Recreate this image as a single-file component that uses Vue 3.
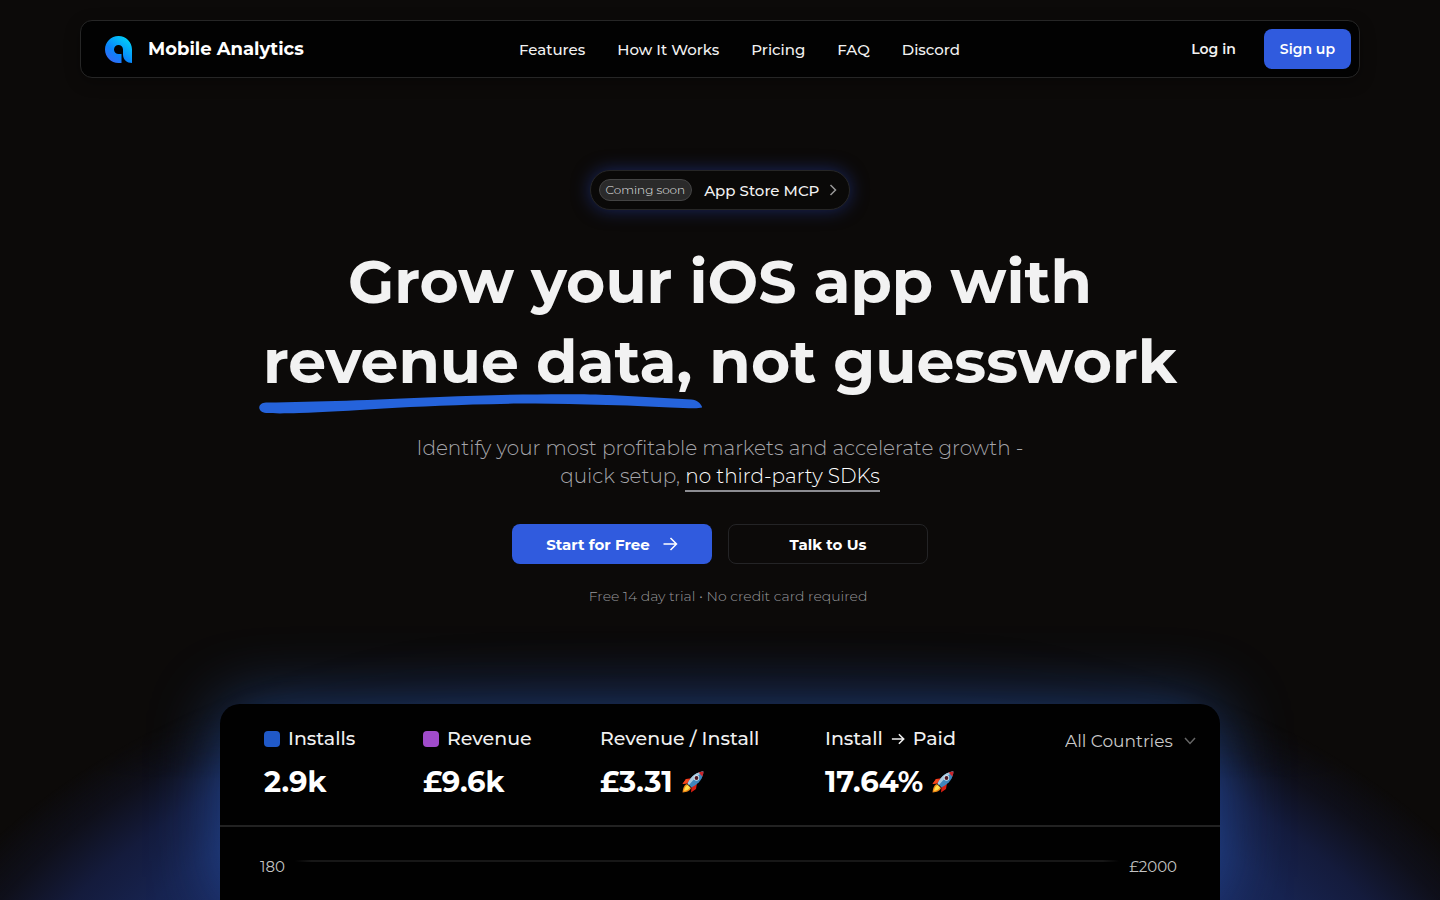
<template>
  <div class="page">
    <div class="glow" />

    <header class="navbar">
      <a class="brand" href="#">
        <svg class="logo" viewBox="0 0 27 27" aria-hidden="true">
          <defs>
            <linearGradient id="logo-fill" x1="0.1" y1="0.95" x2="0.8" y2="0.05">
              <stop offset="0" stop-color="#3b66f5" />
              <stop offset="0.4" stop-color="#0a84fb" />
              <stop offset="1" stop-color="#00d0f8" />
            </linearGradient>
          </defs>
          <path
            fill="url(#logo-fill)"
            d="M13.5 0C21 0 27 6 27 13.5V27C22 27 18 23.5 18 18.5V13.5A4.5 4.5 0 1 0 13.5 18H16.5V27H13.5C6 27 0 21 0 13.5S6 0 13.5 0Z"
          />
        </svg>
        <span>Mobile Analytics</span>
      </a>

      <nav class="links">
        <a v-for="link in links" :key="link" href="#">{{ link }}</a>
      </nav>

      <div class="account">
        <a class="login" href="#">Log in</a>
        <button class="signup" type="button">Sign up</button>
      </div>
    </header>

    <main class="hero">
      <a class="announce" href="#">
        <span class="tag">Coming soon</span>
        <span>App Store MCP</span>
        <svg class="chevron" viewBox="0 0 16 16" aria-hidden="true">
          <path d="M5.5 3L10.5 8L5.5 13" />
        </svg>
      </a>

      <h1>
        Grow your iOS app with<br>
        <span class="marked">revenue data,<svg viewBox="0 0 442 20" preserveAspectRatio="none" aria-hidden="true">
          <path d="M7 8.5C60 8 110 6 180 3C250 0 320 -0.5 350 1L431 5.5C437 6 441 10 442 13.5C438 15 425 14 410 13.5C350 10.5 300 9.5 260 9.5C150 11 90 17.5 40 19C25 19.5 15 19.5 7 19C-2 18 -2 9 7 8.5Z" />
        </svg></span> not guesswork
      </h1>

      <p class="lead">
        Identify your most profitable markets and accelerate growth -<br>
        quick setup, <span class="underlined">no third-party SDKs</span>
      </p>

      <div class="actions">
        <button class="btn primary" type="button">
          Start for Free
          <svg class="arrow" viewBox="0 0 16 16" aria-hidden="true">
            <path d="M1.5 8H14M8.5 2L14.5 8L8.5 14" />
          </svg>
        </button>
        <button class="btn outline" type="button">Talk to Us</button>
      </div>

      <p class="note">Free 14 day trial • No credit card required</p>
    </main>

    <section class="dashboard">
      <div class="stats">
        <div v-for="stat in stats" :key="stat.value" class="stat">
          <div class="label">
            <i v-if="stat.tone" class="swatch" :class="stat.tone" />
            <span>{{ stat.label }}</span>
            <template v-if="stat.to">
              <svg class="to" viewBox="0 0 16 16" aria-hidden="true">
                <path d="M1 8H14.5M9 2.5L14.5 8L9 13.5" />
              </svg>
              <span>{{ stat.to }}</span>
            </template>
          </div>
          <div class="value">
            <span>{{ stat.value }}</span>
            <svg v-if="stat.rocket" class="rocket" viewBox="0 0 22 22" aria-hidden="true">
              <path fill="#d81e12" d="M10 7L4 8L0.5 13L6 12ZM15 12L14 18L9 21.5L9.5 16Z" />
              <path fill="#f5481c" d="M4 8L8 8.5L5 12.5L0.5 13Z" />
              <path fill="#f08a18" d="M5 13C2 14 1 17 0.5 21.5C5 21 8 20 9 17Z" />
              <path fill="#ffe14a" d="M5.5 14C3.5 15 2.5 17 2 20C5 19.5 7 18.5 8 16.5Z" />
              <path fill="#3f87bd" d="M21.5 0.5C15 1 10 4 5.5 12.5L9.5 16.5C18 12 21 7 21.5 0.5Z" />
              <path fill="#a9c9dd" d="M21.5 0.5C15 1 10 4 5.5 12.5L7 14C11 9 15 5 21.5 0.5Z" />
              <path fill="#c8242a" d="M21.5 0.5C19.5 0.6 18 1 16.5 1.6L20.4 5.5C21 4 21.4 2.5 21.5 0.5Z" />
              <circle cx="14.5" cy="7" r="2.7" fill="#d9e5ec" />
              <circle cx="14.5" cy="7" r="1.9" fill="#4a1420" />
            </svg>
          </div>
        </div>

        <div class="country">
          <select v-model="country" aria-label="Country">
            <option>All Countries</option>
          </select>
          <svg viewBox="0 0 12 8" aria-hidden="true">
            <path d="M1 1L6 6.5L11 1" />
          </svg>
        </div>
      </div>

      <div class="chart">
        <span>180</span>
        <i class="gridline" />
        <span>£2000</span>
      </div>
    </section>
  </div>
</template>

<script setup>
  import { ref } from 'vue'

  const country = ref('All Countries')

  const links = ['Features', 'How It Works', 'Pricing', 'FAQ', 'Discord']

  const stats = [
    { label: 'Installs', value: '2.9k', tone: 'blue' },
    { label: 'Revenue', value: '£9.6k', tone: 'purple' },
    { label: 'Revenue / Install', value: '£3.31', rocket: true },
    { label: 'Install', to: 'Paid', value: '17.64%', rocket: true }
  ]
</script>

<style>
  body {
    margin: 0;
    background: #0c0a09;
  }
</style>

<style scoped>
  .page {
    --blue: #305bde;
    position: relative;
    display: flex;
    flex-direction: column;
    box-sizing: border-box;
    min-height: 100vh;
    padding: 20px 80px 0;
    overflow: hidden;
    color: #f2f2f2;
    background: #0c0a09;
    font-family: Montserrat, Inter, "Open Sans", sans-serif;
  }
  a {
    color: inherit;
    text-decoration: none;
  }
  button {
    border: 0;
    font: inherit;
    color: #fff;
    cursor: pointer;
  }
  svg {
    display: block;
    flex: none;
    fill: none;
  }

  /* Wide blue haze rising behind the dashboard, faded out above its top edge */
  .glow {
    position: absolute;
    inset: auto 0 0;
    height: 300px;
    background: radial-gradient(ellipse 60% 172% at 50% 173%, #1a2a62 60%, #17234f 78%, #141b3c 86%, #0f101c 93%, rgba(12, 10, 9, 0) 100%);
    mask-image: linear-gradient(transparent 10%, rgba(0, 0, 0, 0.2) 35%, #000 60%);
  }

  .navbar {
    position: relative;
    display: flex;
    align-items: center;
    justify-content: space-between;
    padding: 8px 8px 8px 24px;
    border: 1px solid #262626;
    border-radius: 12px;
    background: #020202;
    box-shadow: 0 4px 16px rgba(0, 0, 0, 0.3);
  }
  .brand {
    display: flex;
    align-items: center;
    gap: 16px;
    font-size: 18px;
    font-weight: 700;
    color: #fff;
  }
  .logo {
    width: 27px;
    height: 27px;
  }
  .links {
    display: flex;
    gap: 32px;
    font-size: 15px;
    font-weight: 500;
  }
  .account {
    display: flex;
    align-items: center;
    gap: 12px;
    font-size: 14px;
    font-weight: 600;
    line-height: 40px;
  }
  .login {
    padding: 0 16px;
  }
  .signup {
    height: 40px;
    padding: 0 16px;
    border-radius: 8px;
    background: var(--blue);
  }

  .hero {
    position: relative;
    display: flex;
    flex-direction: column;
    align-items: center;
    padding-top: 92px;
    text-align: center;
  }
  .announce {
    display: flex;
    align-items: center;
    box-sizing: border-box;
    height: 40px;
    padding: 0 8px;
    border: 1px solid #262626;
    border-radius: 20px;
    background: #0a0908;
    box-shadow: 0 0 18px rgba(37, 66, 180, 0.5);
    font-size: 15px;
    font-weight: 500;
  }
  .tag {
    margin-right: 12px;
    padding: 0 6px;
    border: 1px solid #444;
    border-radius: 12px;
    background: #2a2a2a;
    color: #e8e8e8;
    font-size: 12px;
    font-weight: 300;
    line-height: 20px;
  }
  .chevron {
    width: 16px;
    height: 16px;
    margin-left: 6px;
    stroke: #999;
    stroke-width: 1.5;
  }
  h1 {
    margin: 32px 0;
    font-size: 60px;
    font-weight: 700;
    line-height: 80px;
  }
  .marked {
    position: relative;
  }
  .marked svg {
    position: absolute;
    left: -4px;
    bottom: -16px;
    width: calc(100% + 14px);
    height: 20px;
    fill: #2563db;
  }
  .lead {
    margin: 0 0 34px;
    color: #a6a6ab;
    font-size: 20px;
    font-weight: 300;
    line-height: 28px;
  }
  .underlined {
    padding-bottom: 2px;
    border-bottom: 2px solid #8d8d92;
    color: #fff;
  }
  .actions {
    display: flex;
    gap: 16px;
  }
  .btn {
    display: flex;
    align-items: center;
    justify-content: center;
    gap: 12px;
    box-sizing: border-box;
    width: 200px;
    height: 40px;
    border-radius: 8px;
    font-size: 15px;
    font-weight: 700;
  }
  .primary {
    background: var(--blue);
  }
  .outline {
    border: 1px solid #242426;
    background: transparent;
  }
  .arrow {
    width: 16px;
    height: 16px;
    stroke: currentColor;
    stroke-width: 1.5;
  }
  .note {
    margin: 22px 0 0 16px;
    color: #98989c;
    font-size: 14px;
    font-weight: 300;
    line-height: 20px;
  }

  .dashboard {
    position: relative;
    flex: 1;
    box-sizing: border-box;
    width: 100%;
    max-width: 1000px;
    margin: 98px auto 0;
    border-radius: 20px 20px 0 0;
    background: #010101;
    box-shadow: 0 0 70px rgba(50, 120, 240, 0.45);
  }
  .stats {
    display: grid;
    grid-template-columns: 159fr 177fr 225fr 240fr 131fr;
    padding: 20px 24px 23px 44px;
    border-bottom: 2px solid #222;
  }
  .label {
    display: flex;
    align-items: center;
    gap: 8px;
    color: #f0f0f0;
    font-size: 19px;
    font-weight: 500;
    line-height: 30px;
    white-space: nowrap;
  }
  .swatch {
    width: 16px;
    height: 16px;
    border-radius: 4px;
  }
  .swatch.blue {
    background: #2059c8;
  }
  .swatch.purple {
    background: #a04bcb;
  }
  .to {
    width: 14px;
    height: 14px;
    stroke: currentColor;
    stroke-width: 1.8;
  }
  .value {
    display: flex;
    align-items: center;
    gap: 9px;
    margin-top: 8px;
    color: #fff;
    font-size: 29px;
    font-weight: 700;
    line-height: 40px;
  }
  .rocket {
    width: 22px;
    height: 22px;
  }
  .country {
    display: flex;
    align-items: center;
    justify-content: space-between;
    height: 34px;
  }
  .country select {
    appearance: none;
    padding: 0;
    border: 0;
    background: transparent;
    color: #c8c8c8;
    font: inherit;
    font-size: 17px;
  }
  .country svg {
    width: 12px;
    height: 8px;
    stroke: #666;
    stroke-width: 1.5;
  }
  .chart {
    display: flex;
    padding: 29px 43px 22px 40px;
    color: #c4c4c4;
    font-size: 15px;
    line-height: 22px;
  }
  .gridline {
    flex: 1;
    height: 2px;
    margin: 4px 10px 0;
    background: linear-gradient(90deg, transparent, #171717 2%, #171717 98%, transparent);
  }
</style>
